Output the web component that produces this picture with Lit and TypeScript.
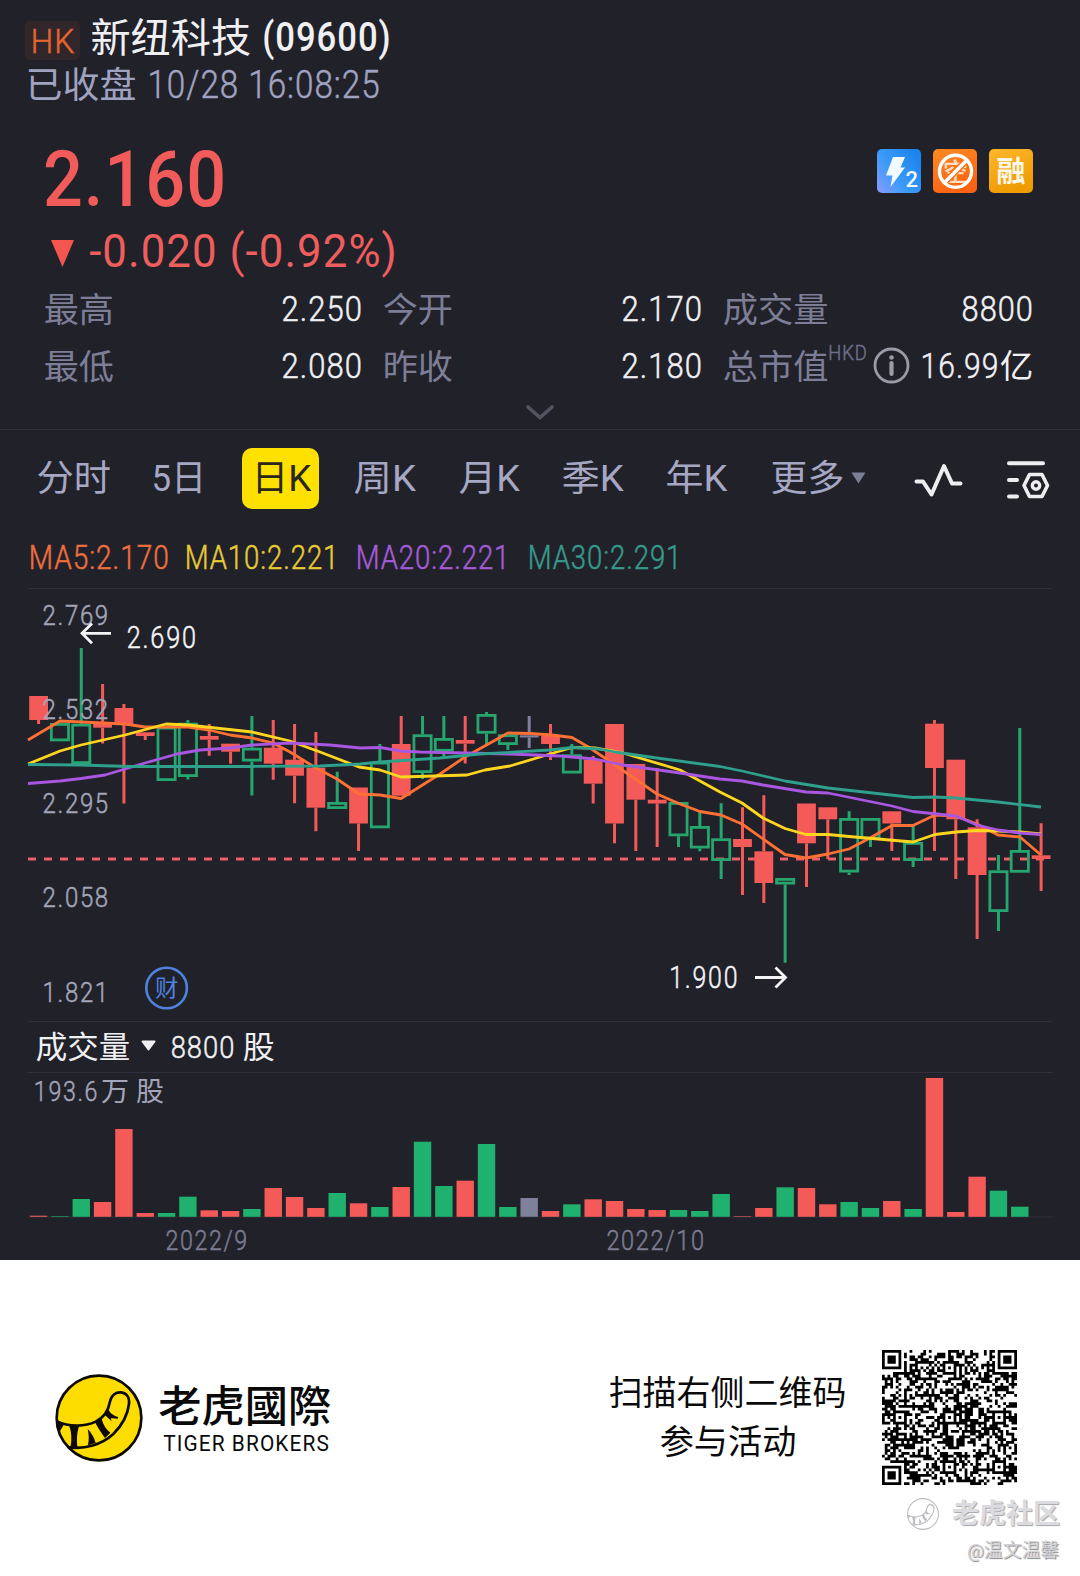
import { css, html, svg, LitElement } from 'lit'
import { customElement, property } from 'lit/decorators.js'

const RED = '#f45b58'
const GREEN = '#27a56f'
const GREY = '#7f8099'

const STEP = 21.33
const FIRST_X = 38.6

// kind, high, body top, body bottom, low, volume bar top
type Candle = [string, number, number, number, number, number]

const candles: Candle[] = [
  ['r', 696, 696, 720, 724, 1215.7],
  ['g', 723, 723, 741.3, 741, 1216.2],
  ['g', 648, 723.7, 764, 764, 1199],
  ['r', 684, 724, 727.7, 743.5, 1202],
  ['r', 704, 708, 724, 803.5, 1129],
  ['r', 732, 732.3, 736, 740, 1213],
  ['g', 726, 726.7, 781, 781, 1213],
  ['g', 720, 722.7, 777, 779.5, 1196.7],
  ['r', 724, 736, 739.7, 755.7, 1210.3],
  ['r', 743.7, 743.7, 751.7, 763.7, 1211],
  ['g', 716, 747.7, 761.5, 795.5, 1209],
  ['r', 720, 747.7, 763.7, 779.7, 1188],
  ['r', 724, 759.7, 775.7, 803.3, 1197],
  ['r', 732, 767.7, 807.7, 831.3, 1208],
  ['g', 771.7, 802, 809, 809, 1193],
  ['r', 787.5, 787.5, 823.5, 851, 1203.3],
  ['g', 744, 761.7, 828.3, 828, 1207],
  ['r', 716, 744, 795.7, 796, 1187],
  ['g', 716, 734.3, 773, 779, 1141.7],
  ['g', 716, 738, 751.7, 758.7, 1186],
  ['r', 716, 740, 743.7, 763.5, 1180.7],
  ['g', 712, 714, 733.7, 744, 1144],
  ['g', 732, 734.3, 745, 750, 1207],
  ['n', 716, 735.3, 737.5, 748, 1198],
  ['r', 724, 735.7, 744, 760, 1211],
  ['g', 744, 754.3, 773.5, 773, 1204.3],
  ['r', 756, 759.7, 783.7, 803.5, 1199.3],
  ['r', 724, 724, 823.5, 843.3, 1201],
  ['r', 764, 764, 799.7, 851, 1209],
  ['r', 768, 799.7, 803.5, 847, 1210],
  ['g', 802, 802, 836.3, 847, 1210],
  ['g', 812, 826, 848.5, 851.3, 1211],
  ['g', 803.3, 838.3, 861, 879, 1194],
  ['r', 807.3, 839, 847, 895, 1216.2],
  ['r', 795.3, 851.3, 883, 903, 1208],
  ['g', 878, 878, 884.5, 962.7, 1187.3],
  ['r', 803.5, 803.5, 843.3, 887, 1188],
  ['r', 807.3, 807.3, 819.3, 859, 1204.3],
  ['g', 811.3, 818, 872.5, 875, 1202],
  ['g', 818, 818, 839.5, 847, 1208],
  ['r', 811.3, 811.3, 823.5, 851, 1201],
  ['g', 825.7, 842, 861, 867, 1209],
  ['r', 720, 723.7, 768, 851, 1078],
  ['r', 759.7, 759.7, 819.3, 879, 1212],
  ['r', 819.3, 827.3, 875, 939, 1176.7],
  ['g', 855, 870.3, 912, 931, 1190.7],
  ['g', 728, 850, 872.7, 872, 1206.7],
  ['r', 823.3, 855.3, 859, 891, 1217],
]

const averages = [
  {
    color: '#ff7034',
    points:
      '28,740 60,721 103,723 125,724 145,727 166,727 188,727 209,730 230,735 252,738 273,743 290,752 316,768 337,779 359,794 380,795 401,798.5 440,774 465,757 508,733 530,733.5 552,735 572,737.5 590,748 615,765 657,794 680,804 700,811.5 721,815 742,824 785,854.5 806,858 828,854 849,849 870,838 892,825.5 913,825.5 935,815 956,816 977,824 998,835 1020,837 1041,855',
  },
  {
    color: '#ffd61f',
    points:
      '28,764 60,751 81,745 125,735 166,724 188,725 252,732 290,741 320,752 359,767 380,770 401,777 467,775 485,770 510,766 540,757 560,751 572,747.5 595,748 623,753 680,770 720,792 742,803 763,818 785,828.5 806,834.5 828,834.5 849,836.5 913,842 935,834.5 956,832 977,830.5 998,831 1020,832 1041,834',
  },
  {
    color: '#a956e0',
    points:
      '28,783.5 60,781 81,778.5 105,775 125,769 145,763 177,754 200,750 230,748 252,745 290,743 330,745 360,748 380,747.5 401,751 420,752 465,753 510,754 560,756 595,759 623,765 680,773 720,779 742,781 763,785 806,792 828,793 892,806 913,811.5 956,816 977,825 998,830 1020,833 1041,834.5',
  },
  {
    color: '#2ea08c',
    points:
      '28,764.5 80,765 130,766.5 250,766.5 320,766 360,764 380,762 440,758 480,754 550,750 572,747.5 600,749 615,752 657,758 720,766.5 742,771 785,781 828,788 913,797.5 935,797 956,798 998,802 1041,807',
  },
]

const priceTicks: [string, number][] = [
  ['2.769', 625.3],
  ['2.532', 719],
  ['2.295', 813.3],
  ['2.058', 907],
  ['1.821', 1002],
]

const colorOf = (kind: string) =>
  kind === 'r' ? RED : kind === 'g' ? GREEN : GREY

// Digits and latin letters are set narrow and a little spaced out.
const isLatin = (text: string) => /^[ -~]+$/.test(text)

// One run of text, fitted to the given width. The box is as high as the
// capitals, so its bottom edge is the baseline.
const run = (text: string, width: number, size: number, cls = '') => {
  const h = Math.round(size * 0.711)
  return html`<svg class="run ${isLatin(text) ? 'num' : ''} ${cls}" width=${width} height=${h}>
    <text
      x=${-size * 0.04}
      y=${h}
      font-size=${size}
      textLength=${width + size * 0.08}
      lengthAdjust="spacingAndGlyphs"
    >${text}</text>
  </svg>`
}

const chartText = (
  text: string,
  x: number,
  y: number,
  width: number,
  size: number,
  cls: string
) => svg`<text class="${isLatin(text) ? 'num' : ''} ${cls}" x=${x - size * 0.04} y=${y}
  font-size=${size} textLength=${width + size * 0.08}
  lengthAdjust="spacingAndGlyphs">${text}</text>`

const runStyles = css`
  .run {
    display: block;
    flex: none;
    overflow: visible;
    fill: currentColor;
  }
  text {
    white-space: pre;
  }
  .num {
    font-weight: 300;
    letter-spacing: 0.07em;
    stroke: currentColor;
    stroke-width: 0.5px;
  }
  .regular {
    font-weight: 400;
    stroke: none;
  }
  .medium {
    font-weight: 500;
    stroke: none;
  }
`

@customElement('x-tail')
export class Tail extends LitElement {
  @property({ type: Boolean }) outline = false

  static styles = css`
    :host {
      display: block;
      flex: none;
      width: 88px;
      height: 88px;
    }
    :host([outline]) {
      width: 32px;
      height: 32px;
    }
    svg {
      display: block;
      width: 100%;
      height: 100%;
    }
  `

  render() {
    const ink = this.outline ? '#bcbdc1' : '#0b0a05'
    const w = this.outline ? 9 : 8
    return html`
      <svg viewBox="0 0 264 264">
        <circle
          cx="132" cy="132" r="127"
          fill=${this.outline ? 'none' : '#fddc00'}
          stroke=${ink} stroke-width=${w}
        ></circle>
        <path
          d="M6 142C40 158 88 160 122 143C150 128 160 110 164 86C169 62 184 54 198 55C215 57 224 70 222 90C218 125 200 155 175 180C140 212 90 226 42 220"
          fill="none" stroke=${ink} stroke-width=${w}
        ></path>
        <path
          d="M4 138L28 149L12 176ZM42 153L72 157Q62 188 68 224L46 221Q54 186 42 153ZM98 165Q116 184 122 207L99 214Q104 190 98 165ZM120 145L140 134Q146 160 166 176L150 192Q136 174 120 145ZM149 122L160 106Q166 122 190 130L188 134Q176 132 167 133L170 142Q160 132 149 122Z"
          fill=${ink}
        ></path>
      </svg>
    `
  }
}

@customElement('x-qr')
export class Qr extends LitElement {
  static styles = css`
    :host {
      display: block;
      flex: none;
    }
    svg {
      display: block;
    }
  `

  #modules() {
    const n = 49
    const centers = [6, 24, 42]
    let seed = 9600
    let d = ''
    for (let y = 0; y < n; y++) {
      for (let x = 0; x < n; x++) {
        seed = (seed * 1103515245 + 12345) % 2147483648
        let on = (seed >> 16) % 100 < 51
        if (y === 6 || x === 6) on = (x + y) % 2 === 0
        for (const cy of centers) {
          for (const cx of centers) {
            const r = Math.max(Math.abs(x - cx), Math.abs(y - cy))
            if (r <= 2) on = r !== 1
          }
        }
        for (const [fx, fy] of [[3, 3], [n - 4, 3], [3, n - 4]]) {
          const r = Math.max(Math.abs(x - fx), Math.abs(y - fy))
          if (r <= 4) on = r === 3 || r <= 1
        }
        if (on) d += `M${x} ${y}h1v1h-1z`
      }
    }
    return d
  }

  render() {
    return html`
      <svg width="135" height="135" viewBox="0 0 49 49">
        <path d=${this.#modules()} fill="#000"></path>
      </svg>
    `
  }
}

@customElement('x-quote')
export class Quote extends LitElement {
  static styles = [
    runStyles,
    css`
      :host {
        display: block;
        height: 429px;
        border-bottom: 1px solid #30313c;
        color: #f0f0f3;
      }
      .line {
        display: flex;
        align-items: flex-end;
      }
      .title {
        height: 52px;
        padding-left: 25px;
      }
      .badge {
        display: flex;
        box-sizing: border-box;
        width: 55px;
        height: 39px;
        margin: 0 12px -8px 0;
        padding: 9px 0 0 7px;
        border-radius: 5px;
        background: #31272b;
        color: #e4652f;
      }
      .code {
        margin: 0 0 1px 14px;
      }
      .status {
        height: 46px;
        padding-left: 27px;
        gap: 14px;
        color: #a0a3c0;
      }
      .price {
        height: 108px;
        padding: 0 47px 0 46px;
        color: #f15b59;
      }
      .tags {
        display: flex;
        gap: 12px;
        margin: 0 0 13px auto;
      }
      .change {
        height: 61px;
        padding-left: 51px;
        gap: 17px;
        color: #ee5e5c;
      }
      .stats {
        display: grid;
        grid-template-columns: 316px 317px 308px;
        grid-template-rows: 54px 57px;
        column-gap: 23px;
        padding-left: 45px;
      }
      .label {
        margin: 0 auto -1px 0;
        color: #7d7e96;
      }
      .unit {
        margin: 0 6px 18px 2px;
        color: #6f7087;
      }
      .cap .label {
        margin-right: 0;
      }
      .info {
        margin: 0 auto -6px 0;
      }
      .yi {
        margin-left: 3px;
      }
      .more {
        display: flex;
        justify-content: center;
        padding-top: 27px;
      }
    `,
  ]

  #stat(label: string, value: string, width: number, labelWidth = 67.5) {
    return html`
      <div class="line">
        ${run(label, labelWidth, 34.5, 'label')} ${run(value, width, 34.5)}
      </div>
    `
  }

  #tags() {
    return html`
      <div class="tags">
        <svg width="44" height="44" viewBox="0 0 44 44">
          <defs>
            <linearGradient id="blue" x1="0" y1="1" x2="1" y2="0.3">
              <stop offset="0" stop-color="#8a9bff"></stop>
              <stop offset="0.45" stop-color="#3d9bf8"></stop>
              <stop offset="1" stop-color="#1c84ee"></stop>
            </linearGradient>
          </defs>
          <rect width="44" height="44" rx="5" fill="url(#blue)"></rect>
          <path d="M16 8H28L23.500 18.500H28L13.500 38L15.500 26.500H9Z" fill="#f2f9ff"></path>
          <text x="28.500" y="37.500" font-size="22" font-weight="500" fill="#f2f9ff">2</text>
        </svg>
        <svg width="44" height="44" viewBox="0 0 44 44">
          <defs>
            <linearGradient id="orange" x1="0" y1="0" x2="0.4" y2="1">
              <stop offset="0" stop-color="#fd8a22"></stop>
              <stop offset="1" stop-color="#fb6314"></stop>
            </linearGradient>
          </defs>
          <rect width="44" height="44" rx="5" fill="url(#orange)"></rect>
          <text x="10" y="31.500" font-size="25" font-weight="500" fill="#ffdcc0">空</text>
          <path d="M11 34L34 11" stroke="#fb6f19" stroke-width="6.500"></path>
          <circle cx="22.500" cy="22.300" r="16" fill="none" stroke="#fff" stroke-width="3.400"></circle>
          <path d="M11 34L34 11" stroke="#fff" stroke-width="3.600"></path>
        </svg>
        <svg width="44" height="44" viewBox="0 0 44 44">
          <defs>
            <linearGradient id="gold" x1="0" y1="0" x2="0.4" y2="1">
              <stop offset="0" stop-color="#fcb72b"></stop>
              <stop offset="1" stop-color="#f09b02"></stop>
            </linearGradient>
          </defs>
          <rect width="44" height="44" rx="5" fill="url(#gold)"></rect>
          <text x="7.500" y="33" font-size="29" font-weight="700" fill="#fff8e8">融</text>
        </svg>
      </div>
    `
  }

  render() {
    return html`
      <div class="line title">
        <div class="badge">${run('HK', 42, 33)}</div>
        ${run('新纽科技', 157.5, 40)}
        ${run('(09600)', 126, 41, 'medium code')}
      </div>
      <div class="line status">
        ${run('已收盘', 108, 36)} ${run('10/28 16:08:25', 230, 38)}
      </div>
      <div class="line price">
        ${run('2.160', 178, 77.5, 'medium')} ${this.#tags()}
      </div>
      <div class="line change">
        <svg width="23" height="27" viewBox="0 0 23 27">
          <path d="M0 0H23L11.500 27Z" fill="#f5554f"></path>
        </svg>
        ${run('-0.020 (-0.92%)', 305, 45.5, 'regular')}
      </div>
      <div class="stats">
        ${this.#stat('最高', '2.250', 78.5)} ${this.#stat('今开', '2.170', 78.5)}
        ${this.#stat('成交量', '8800', 69.5, 103)}
        ${this.#stat('最低', '2.080', 78.5)} ${this.#stat('昨收', '2.180', 78.5)}
        <div class="line cap">
          ${run('总市值', 103, 34.5, 'label')} ${run('HKD', 38, 20.5, 'unit')}
          <svg class="info" width="37" height="37" viewBox="0 0 37 37">
            <circle cx="18.500" cy="18.500" r="16.500" fill="none" stroke="#9a9ba6" stroke-width="2.800"></circle>
            <circle cx="18.500" cy="10.500" r="2.300" fill="#9a9ba6"></circle>
            <path d="M18.500 16V27" stroke="#9a9ba6" stroke-width="4.200" stroke-linecap="round"></path>
          </svg>
          ${run('16.99', 76, 34.5)} ${run('亿', 31, 33, 'yi')}
        </div>
      </div>
      <div class="more">
        <svg width="28" height="15" viewBox="0 0 28 15">
          <path d="M2 2L14 12.500L26 2" fill="none" stroke="#52535e" stroke-width="3.600" stroke-linecap="round"></path>
        </svg>
      </div>
    `
  }
}

@customElement('x-toolbar')
export class Toolbar extends LitElement {
  static styles = [
    runStyles,
    css`
      :host {
        display: block;
        color: #a5a7c3;
      }
      .tabs {
        display: flex;
        align-items: flex-end;
        gap: 44.8px;
        height: 61px;
        padding-left: 38px;
      }
      .five {
        margin: 0 -2.5px 0 -1.5px;
      }
      .active {
        display: flex;
        box-sizing: border-box;
        width: 77px;
        height: 61px;
        margin: 0 -8px -18px -5px;
        padding: 17px 0 0 11px;
        border-radius: 10px;
        background: #ffe100;
        color: #2a2718;
      }
      .drop {
        display: flex;
        align-items: flex-end;
        gap: 8px;
        margin-left: 1.5px;
      }
      .drop .arrow {
        margin-bottom: 7px;
      }
      .wave {
        margin: 0 0 -7px 3px;
      }
      .config {
        margin: 0 0 -9px -2.5px;
      }
      .averages {
        display: flex;
        align-items: flex-end;
        height: 78px;
        padding: 0 0 19px 30px;
      }
      .ma5 {
        color: #ee6f3e;
        margin-right: 17px;
      }
      .ma10 {
        color: #e6cb35;
        margin-right: 19px;
      }
      .ma20 {
        color: #a45bd8;
        margin-right: 20px;
      }
      .ma30 {
        color: #36998a;
      }
    `,
  ]

  render() {
    return html`
      <div class="tabs">
        ${run('分时', 71.5, 36)} ${run('5日', 51.5, 36, 'five')}
        <div class="active">${run('日K', 57, 36)}</div>
        ${run('周K', 59.5, 36)} ${run('月K', 58.5, 36)} ${run('季K', 59.4, 36)}
        ${run('年K', 59, 36)}
        <div class="drop">
          ${run('更多', 71, 36)}
          <svg class="arrow" width="15" height="12" viewBox="0 0 15 12">
            <path d="M0.500 0.500H14.500L7.500 11.500Z" fill="#7d7f99"></path>
          </svg>
        </div>
        <svg class="wave" width="49" height="36" viewBox="0 0 49 36">
          <path
            d="M2.500 19.500H9L17.500 32.500L30 4L38 21.500H46.500"
            fill="none" stroke="#eeeef1" stroke-width="4"
            stroke-linecap="round" stroke-linejoin="round"
          ></path>
        </svg>
        <svg class="config" width="45" height="40" viewBox="0 0 45 40">
          <g fill="none" stroke="#eeeef1" stroke-width="4" stroke-linecap="round" stroke-linejoin="round">
            <path d="M3 3.300H37M3 20H11M3 36.500H11"></path>
            <path d="M18 25.500L23.500 14.500H36L41.500 25.500L36 36.500H23.500Z" stroke-width="3.600"></path>
            <circle cx="30" cy="25.500" r="3.700" stroke-width="3.400"></circle>
          </g>
        </svg>
      </div>
      <div class="averages">
        ${run('MA5:2.170', 138.5, 32.5, 'ma5')}
        ${run('MA10:2.221', 152, 32.5, 'ma10')}
        ${run('MA20:2.221', 152, 32.5, 'ma20')}
        ${run('MA30:2.291', 152, 32.5, 'ma30')}
      </div>
    `
  }
}

@customElement('x-chart')
export class Chart extends LitElement {
  static styles = [
    runStyles,
    css`
      :host {
        display: block;
        color: #f0f0f3;
      }
      .plot {
        display: block;
      }
      .plot text {
        fill: currentColor;
      }
      .tick {
        color: #a3a5b8;
      }
      .mark {
        color: #f4f4f6;
      }
      .date {
        color: #7b7c90;
      }
      .finance {
        color: #4f82e0;
      }
      .caption {
        display: flex;
        align-items: flex-end;
        height: 36px;
        padding: 0 0 14px 36.5px;
      }
      .arrow {
        margin: 0 16px 7px 12px;
      }
      .shares {
        margin-left: 10px;
      }
    `,
  ]

  #candle([kind, high, top, bottom, low]: Candle, i: number) {
    const x = FIRST_X + i * STEP
    const color = colorOf(kind)
    const wicks = `M${x} ${high}V${top}M${x} ${bottom}V${Math.max(low, bottom)}`
    if (kind !== 'g') {
      return svg`
        <path d=${wicks} stroke=${color} stroke-width="3"></path>
        <rect x=${x - 9.4} y=${top} width="18.800" height=${bottom - top} fill=${color}></rect>
      `
    }
    return svg`
      <path d=${wicks} stroke=${color} stroke-width="3"></path>
      <rect x=${x - 8.6} y=${top + 1.4} width="17.200" height=${bottom - top - 2.8}
        fill="none" stroke=${color} stroke-width="2.800"></rect>
    `
  }

  #volume([kind, , , , , top]: Candle, i: number) {
    const color = kind === 'g' ? '#20b16e' : colorOf(kind)
    return svg`<rect x=${FIRST_X + i * STEP - 8.7} y=${top} width="17.400"
      height=${Math.max(0, 1216.8 - top)} fill=${color}></rect>`
  }

  render() {
    return html`
      <svg class="plot" width="1080" height="434" viewBox="0 588 1080 434">
        <path d="M28 588.500H1052M28 1021.500H1052" stroke="#2f303b"></path>
        <path d="M28 859H1050" stroke="#e9606a" stroke-width="3" stroke-dasharray="8 8"></path>
        ${candles.map((c, i) => this.#candle(c, i))}
        ${averages.map(
          a => svg`<polyline points=${a.points} fill="none" stroke=${a.color}
            stroke-width="2.800" stroke-linejoin="round"></polyline>`
        )}
        ${priceTicks.map(([t, y]) => chartText(t, 43.7, y, 65, 28, 'tick'))}
        ${chartText('2.690', 128, 648, 68.5, 30.5, 'mark')}
        ${chartText('1.900', 670.5, 988, 67.5, 30.5, 'mark')}
        <path
          d="M111 633.300H82M92 623.500L82 633.300L92 643.200M755 977.500H785M775.500 967.500L785.500 977.500L775.500 987.500"
          fill="none" stroke="#f4f4f6" stroke-width="2.800"
        ></path>
        <circle cx="166.600" cy="988" r="20.300" fill="none" stroke="#4f82e0" stroke-width="2.600"></circle>
        ${chartText('财', 156, 996, 21.5, 23, 'finance')}
      </svg>
      <div class="caption">
        ${run('成交量', 92, 31)}
        <svg class="arrow" width="15" height="11" viewBox="0 0 15 11">
          <path d="M1.500 1.500H13.500L7.500 9.500Z" fill="#f0f0f3" stroke="#f0f0f3" stroke-width="2" stroke-linejoin="round"></path>
        </svg>
        ${run('8800', 62, 32)} ${run('股', 29.5, 31, 'shares')}
      </div>
      <svg class="plot" width="1080" height="188" viewBox="0 1072 1080 188">
        <path d="M28 1072.500H1052M28 1217H1052" stroke="#2f303b"></path>
        ${candles.map((c, i) => this.#volume(c, i))}
        ${chartText('193.6', 35, 1101.3, 63, 28.5, 'tick')}
        ${chartText('万 股', 102, 1101.3, 61, 27, 'tick')}
        ${chartText('2022/9', 166.7, 1250, 81, 28, 'date')}
        ${chartText('2022/10', 607.5, 1250, 97, 28, 'date')}
      </svg>
    `
  }
}

@customElement('x-share')
export class Share extends LitElement {
  static styles = [
    runStyles,
    css`
      :host {
        display: block;
        box-sizing: border-box;
        height: 316px;
        padding-top: 90px;
        background: #fff;
        color: #0a0a0a;
      }
      .row {
        display: flex;
        align-items: center;
        height: 135px;
        padding: 0 63px 0 55px;
      }
      .name {
        display: flex;
        flex-direction: column;
        gap: 14px;
        padding: 6px 0 0 17px;
      }
      .latin {
        margin-left: 4px;
      }
      .hint {
        display: flex;
        flex-direction: column;
        align-items: center;
        gap: 25px;
        margin: 0 37px 0 auto;
      }
      .mark {
        display: flex;
        align-items: center;
        justify-content: flex-end;
        gap: 13px;
        height: 32px;
        padding: 13px 20px 0 0;
        color: #dcdce0;
        font-size: 27px;
        font-weight: 700;
        line-height: 32px;
        text-shadow: 1px 1px 1px #a4a5a9;
      }
      .author {
        height: 24px;
        padding: 9px 21px 0 0;
        color: #d4d4d8;
        font-size: 18.8px;
        line-height: 24px;
        text-align: right;
        text-shadow: 1px 1px 1px #85868a;
      }
    `,
  ]

  render() {
    return html`
      <div class="row">
        <x-tail></x-tail>
        <div class="name">
          ${run('老虎國際', 169.5, 43, 'medium')}
          ${run('TIGER BROKERS', 165, 21.5, 'regular latin')}
        </div>
        <div class="hint">
          ${run('扫描右侧二维码', 235, 34)} ${run('参与活动', 134, 34)}
        </div>
        <x-qr></x-qr>
      </div>
      <div class="mark"><x-tail outline></x-tail>老虎社区</div>
      <div class="author">@温文温馨</div>
    `
  }
}

@customElement('app-root')
export class AppRoot extends LitElement {
  static styles = css`
    :host {
      display: block;
      width: 1080px;
      height: 1576px;
      overflow: hidden;
      background: #21212a;
      font-family: Roboto, 'Noto Sans CJK SC', sans-serif;
    }
  `

  render() {
    return html`
      <x-quote></x-quote>
      <x-toolbar></x-toolbar>
      <x-chart></x-chart>
      <x-share></x-share>
    `
  }
}
